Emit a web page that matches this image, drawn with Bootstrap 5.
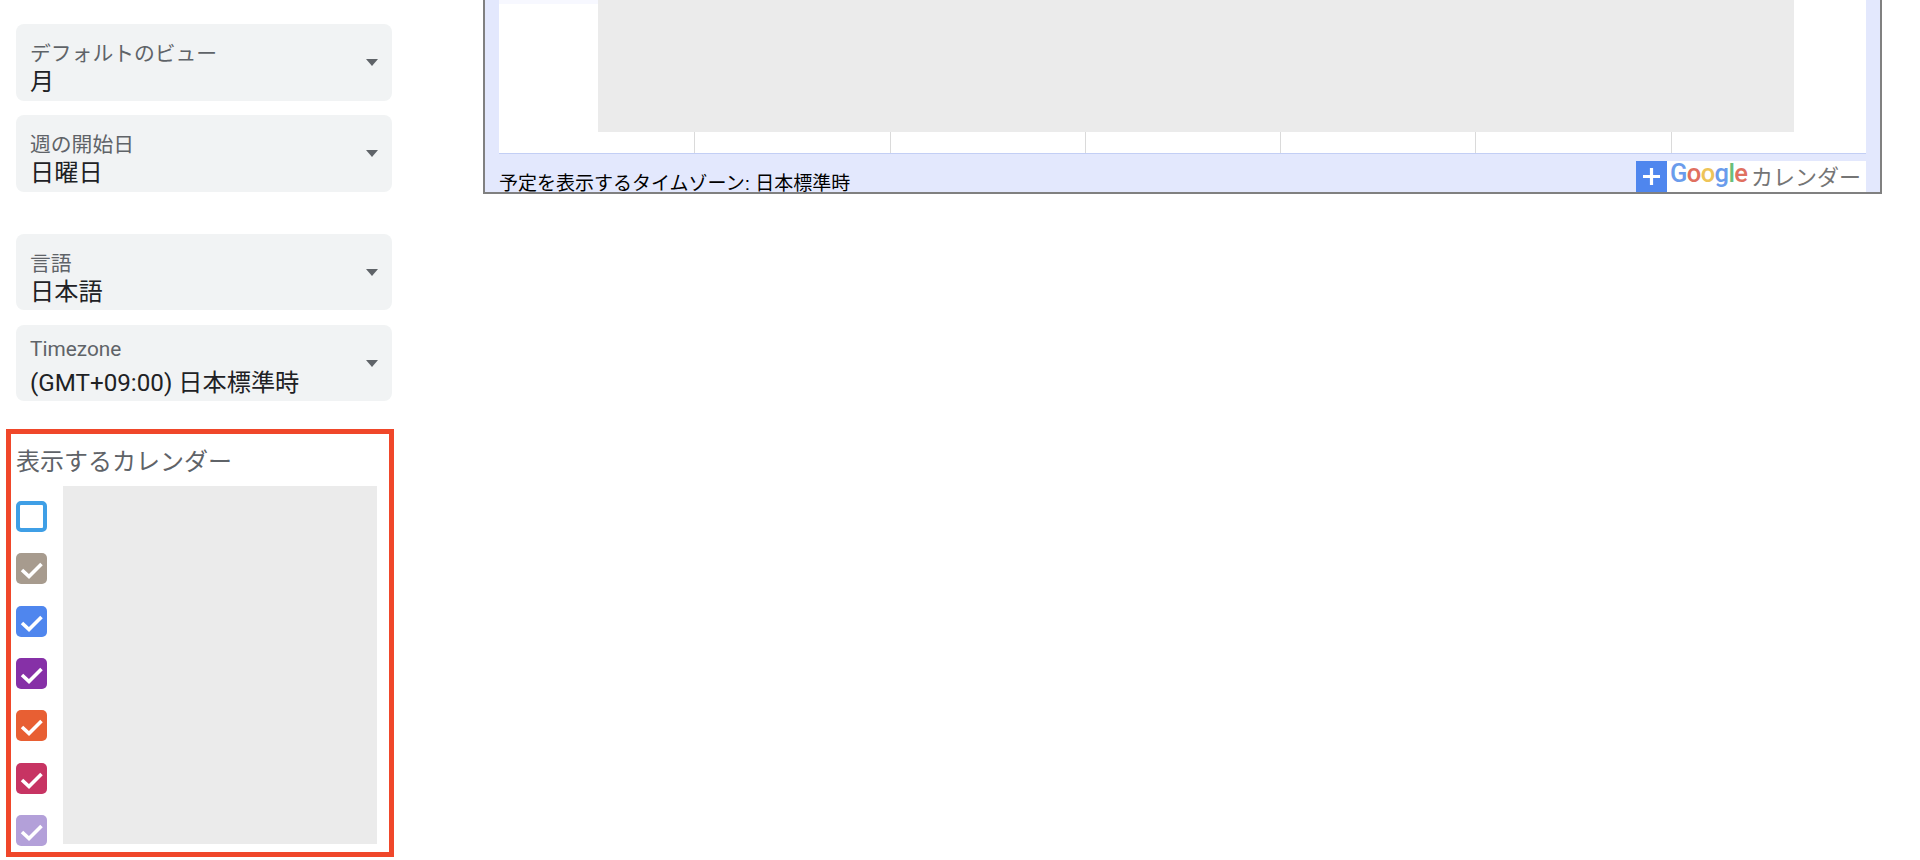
<!DOCTYPE html>
<html lang="ja">

<head>
  <meta charset="UTF-8">
  <meta name="viewport" content="width=device-width, initial-scale=1.0">
  <title>カレンダーの設定</title>
  <link href="https://cdn.jsdelivr.net/npm/bootstrap@5.3.3/dist/css/bootstrap.min.css" rel="stylesheet">
  <style>
    body {
      font-family: Roboto, "Noto Sans CJK JP", sans-serif;
      height: 860px;
      overflow: hidden;
      color: #202124;
    }
    .side-col {
      width: 483px;
      padding: 24.3px 0 0 6px;
    }
    .fake-select {
      width: 376px;
      height: 76.3px;
      margin: 0 0 14.7px 10px;
      padding: 15px 14px 0 14px;
      background: #f1f3f4;
      border-radius: 8px;
    }
    .fake-select.group-end {
      margin-bottom: 42.4px;
    }
    .fake-select.last-select {
      margin-bottom: 27.7px;
    }
    .select-label {
      font-size: 20.8px;
      line-height: 30px;
      color: #5f6368;
    }
    .select-label.latin-label {
      margin-top: -6px;
      margin-bottom: 6px;
    }
    .select-value {
      font-size: 24.2px;
      line-height: 26px;
    }
    .select-arrow {
      width: 0;
      height: 0;
      border-left: 6.5px solid transparent;
      border-right: 6.5px solid transparent;
      border-top: 7px solid #5f6368;
      margin-top: -15px;
    }
    .cal-box {
      width: 388px;
      height: 428px;
      border: 5px solid #f0472a;
      padding-left: 5px;
    }
    .cal-title {
      height: 52px;
      padding-top: 10px;
      font-size: 24px;
      line-height: 36px;
      color: #5f6368;
    }
    .check-list {
      width: 31px;
      margin-top: 15px;
      gap: 21.33px;
    }
    .cal-check {
      display: block;
      width: 31px;
      height: 31px;
      border-radius: 5px;
    }
    .cal-check.empty {
      border: 4px solid #3f9fe6;
    }
    .gray-block {
      background: #ebebeb;
    }
    .cal-names {
      width: 314px;
      height: 358px;
      margin-left: 16px;
    }
    .embed-frame {
      width: 1399px;
      height: 194px;
      background: #e3e8fd;
      border-style: solid;
      border-color: #808080;
      border-width: 0 2px 2px 2px;
      padding: 0 14px;
      overflow: hidden;
    }
    .cal-area {
      height: 154px;
      background: #fff;
      border-bottom: 1px solid #c3cff5;
    }
    .top-strip {
      width: 99px;
      height: 4px;
      background: #f7f8ff;
      position: absolute;
    }
    .cal-events {
      height: 132px;
      margin: 0 72px 0 99px;
    }
    .week-row {
      padding-left: 1px;
    }
    .week-cell {
      height: 21px;
      flex: 1 1 0;
      border-right: 1px solid #dadada;
    }
    .week-cell:last-child {
      border-right: 0;
    }
    .embed-foot {
      height: 38px;
    }
    .tz-note {
      font-family: "Liberation Sans", "Noto Sans CJK JP", sans-serif;
      font-size: 19px;
      line-height: 28px;
      color: #000;
      margin-bottom: -6px;
    }
    .gcal-badge {
      width: 230px;
      height: 31px;
      background: #fff;
    }
    .gcal-plus {
      width: 31px;
      height: 31px;
      background: #4f86ee;
    }
    .gcal-logo {
      font-family: Roboto, sans-serif;
      font-weight: 500;
      font-size: 25.5px;
      line-height: 26px;
      width: 84px;
      padding-left: 3px;
      margin-top: -1px;
      letter-spacing: -0.6px;
    }
    .logo-blue { color: #6a9cec; }
    .logo-red { color: #e0705f; }
    .logo-yellow { color: #eec458; }
    .logo-green { color: #6abf7b; }
    .gcal-text {
      font-family: "Noto Sans CJK JP", sans-serif;
      font-size: 22px;
      line-height: 31px;
      color: #757575;
      margin-top: -1px;
    }
  </style>
</head>

<body>
  <div class="d-flex">
    <div class="side-col flex-shrink-0">
      <div class="fake-select d-flex justify-content-between align-items-center">
        <div class="align-self-start">
          <div class="select-label">デフォルトのビュー</div>
          <div class="select-value">月</div>
        </div>
        <div class="select-arrow"></div>
      </div>
      <div class="fake-select group-end d-flex justify-content-between align-items-center">
        <div class="align-self-start">
          <div class="select-label">週の開始日</div>
          <div class="select-value">日曜日</div>
        </div>
        <div class="select-arrow"></div>
      </div>
      <div class="fake-select d-flex justify-content-between align-items-center">
        <div class="align-self-start">
          <div class="select-label">言語</div>
          <div class="select-value">日本語</div>
        </div>
        <div class="select-arrow"></div>
      </div>
      <div class="fake-select last-select d-flex justify-content-between align-items-center">
        <div class="align-self-start">
          <div class="select-label latin-label">Timezone</div>
          <div class="select-value">(GMT+09:00) 日本標準時</div>
        </div>
        <div class="select-arrow"></div>
      </div>

      <div class="cal-box">
        <div class="cal-title">表示するカレンダー</div>
        <div class="d-flex align-items-start">
          <div class="check-list d-flex flex-column" id="checks"></div>
          <div class="cal-names gray-block"></div>
        </div>
      </div>
    </div>

    <div class="embed-frame">
      <div class="cal-area position-relative">
        <div class="top-strip"></div>
        <div class="cal-events gray-block"></div>
        <div class="week-row d-flex">
          <div class="week-cell"></div>
          <div class="week-cell"></div>
          <div class="week-cell"></div>
          <div class="week-cell"></div>
          <div class="week-cell"></div>
          <div class="week-cell"></div>
          <div class="week-cell"></div>
        </div>
      </div>
      <div class="embed-foot d-flex justify-content-between align-items-end">
        <div class="tz-note">予定を表示するタイムゾーン: 日本標準時</div>
        <div class="gcal-badge d-flex">
          <div class="gcal-plus d-flex align-items-center justify-content-center">
            <svg width="19" height="19" viewBox="0 0 19 19"><path d="M9.5 1v17M1 9.500h17" stroke="#fff" stroke-width="3.2" fill="none"/></svg>
          </div>
          <div class="gcal-logo"><span class="logo-blue">G</span><span class="logo-red">o</span><span class="logo-yellow">o</span><span class="logo-blue">g</span><span class="logo-green">l</span><span class="logo-red">e</span></div>
          <div class="gcal-text">カレンダー</div>
        </div>
      </div>
    </div>
  </div>

  <script>
    // calendar checkboxes, first one is unchecked
    const checkColors = ['', '#a79b8e', '#4f86ee', '#8630a7', '#e85f33', '#c73463', '#b3a0d9'];
    const checks = document.getElementById('checks');
    checkColors.forEach(function(color) {
      if (!color) {
        checks.innerHTML += '<span class="cal-check empty"></span>';
        return;
      }
      checks.innerHTML += `<svg class="cal-check" viewBox="0 0 31 31" style="background:${color}"><path d="M6 17l7 6.5L25.500 11" stroke="#fff" stroke-width="3.6" fill="none"/></svg>`;
    });
  </script>

  <script src="https://cdn.jsdelivr.net/npm/bootstrap@5.3.3/dist/js/bootstrap.bundle.min.js"></script>
</body>

</html>
